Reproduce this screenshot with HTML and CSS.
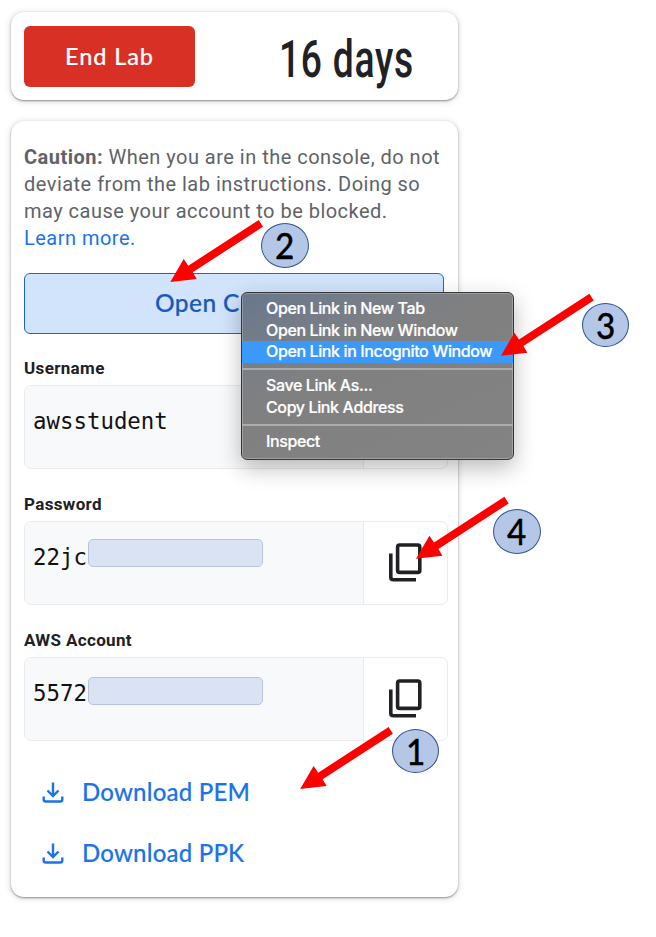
FILE: index.html
```html
<!DOCTYPE html>
<html lang="en">
<head>
<meta charset="utf-8">
<title>Lab</title>
<link rel="stylesheet" href="styles.css">
</head>
<body>
<main class="panel">
  <section class="card timer">
    <button class="end">End Lab</button>
    <div class="time"><span class="time-text">16 days</span></div>
  </section>
  <section class="card details">
    <p class="caution"><b>Caution:</b> When you are in the console, do not<br>deviate from the lab instructions. Doing so<br>may cause your account to be blocked.<br><a class="learn">Learn more.</a></p>
    <a class="open"><span>Open C</span></a>
    <h2 class="label">Username</h2>
    <div class="field"><div class="value">awsstudent</div><div class="copy"></div></div>
    <h2 class="label">Password</h2>
    <div class="field"><div class="value">22jc<span class="mask"></span></div><div class="copy"><svg width="48" height="48" viewBox="0 0 48 48" fill="none" stroke="#202124" stroke-width="3.6"><rect x="14.6" y="6" width="22.2" height="27.4" rx="2"/><path d="M7.8 14.4V38.2Q7.8 40.8 10.4 40.8H33"/></svg></div></div>
    <h2 class="label">AWS Account</h2>
    <div class="field"><div class="value">5572<span class="mask low"></span></div><div class="copy"><svg width="48" height="48" viewBox="0 0 48 48" fill="none" stroke="#202124" stroke-width="3.6"><rect x="14.6" y="6" width="22.2" height="27.4" rx="2"/><path d="M7.8 14.4V38.2Q7.8 40.8 10.4 40.8H33"/></svg></div></div>
    <div class="downloads">
      <a class="download"><svg width="24" height="24" viewBox="0 0 24 24" fill="none" stroke="#1a73e8" stroke-width="2.4"><path d="M12 1.5V14M6.5 9.5L12 15L17.5 9.5M2.7 15.5V18.5Q2.7 20.5 4.7 20.5H19.3Q21.3 20.5 21.3 18.5V15.5"/></svg><span>Download PEM</span></a>
      <a class="download"><svg width="24" height="24" viewBox="0 0 24 24" fill="none" stroke="#1a73e8" stroke-width="2.4"><path d="M12 1.5V14M6.5 9.5L12 15L17.5 9.5M2.7 15.5V18.5Q2.7 20.5 4.7 20.5H19.3Q21.3 20.5 21.3 18.5V15.5"/></svg><span>Download PPK</span></a>
    </div>
  </section>
</main>
<nav class="menu">
  <div class="item"><span>Open Link in New Tab</span></div>
  <div class="item"><span>Open Link in New Window</span></div>
  <div class="item active"><span>Open Link in Incognito Window</span></div>
  <hr>
  <div class="item"><span>Save Link As...</span></div>
  <div class="item"><span>Copy Link Address</span></div>
  <hr>
  <div class="item"><span>Inspect</span></div>
</nav>
<svg class="arrows" width="656" height="937" viewBox="0 0 656 937" fill="#f00">
  <defs><path id="arrow" d="M0 0L13.4-23L18-16.3L88.4-62L92.7-55.3L22.4-9.7L26.4-3Z"/></defs>
  <use href="#arrow" x="170.3" y="282"/>
  <use href="#arrow" x="501" y="355.7"/>
  <use href="#arrow" x="416" y="558.7"/>
  <use href="#arrow" x="300.2" y="789"/>
</svg>
<div class="badge b1"><span>1</span></div>
<div class="badge b2"><span>2</span></div>
<div class="badge b3"><span>3</span></div>
<div class="badge b4"><span>4</span></div>
</body>
</html>
```
FILE: styles.css
```css
* { box-sizing: border-box; }
body { margin: 0; width: 656px; height: 937px; position: relative; overflow: hidden; background: #fff; font-family: Roboto, sans-serif; color: #202124; }
.panel { width: 458px; padding: 12px 0 0 11px; display: flex; flex-direction: column; gap: 21px; }
.card { background: #fff; border-radius: 13px; box-shadow: 0 1px 2px rgba(0,0,0,.38), 0 1px 6px 1px rgba(0,0,0,.13); }
.timer { height: 88px; padding: 14px 13px; display: flex; }
.end { width: 171px; height: 61px; padding: 0; border: 0; border-radius: 6px; background: #d93025; color: #fff; font: 500 23.5px/61px Lato, sans-serif; letter-spacing: .9px; -webkit-text-stroke: .15px; }
.time { flex: 1; text-align: center; line-height: 68px; font-size: 51px; font-weight: 500; white-space: nowrap; padding-left: 52px; }
.time-text { display: inline-block; transform: scaleX(.73); margin: 0 -30px; letter-spacing: 1px; }
.details { height: 776px; padding: 23px 10px 0 13px; }
.caution { margin: 0; height: 129px; font-size: 20px; line-height: 27px; color: #5f6368; white-space: nowrap; letter-spacing: .48px; }
.learn { color: #1a73e8; }
.open { display: block; width: 420px; height: 61px; border: 1px solid #1967d2; border-radius: 6px; background: #d2e3fc; color: #185abc; font: 500 24.5px/58px Lato, sans-serif; letter-spacing: .4px; padding-left: 130px; -webkit-text-stroke: .2px; }
.label { height: 20px; margin: 25px 0 7px; font-size: 17px; line-height: 20px; font-weight: 700; letter-spacing: .35px; }
.open + .label { margin-top: 24px; }
.field { height: 84px; border: 1px solid #e8eaed; border-radius: 7px; display: flex; overflow: hidden; }
.value { position: relative; width: 338px; background: #f8f9fa; padding: 17px 0 0 8px; font: 22.4px/36px "DejaVu Sans Mono", monospace; color: #111; }
.mask { position: absolute; left: 63px; top: 17px; width: 175px; height: 28px; border: 1px solid #b4c3e0; border-radius: 5px; background: #dae3f3; }
.mask.low { top: 19px; }
.copy { flex: 1; border-left: 1px solid #e8eaed; padding: 17px 0 0 19px; }
.copy svg, .download svg { display: block; }
.downloads { padding: 20px 0 0 17px; }
.download { display: flex; height: 61px; align-items: center; gap: 17px; color: #1a73e8; font: 500 24px/30px Lato, sans-serif; letter-spacing: .2px; -webkit-text-stroke: .15px; }
.download svg { margin-top: 3px; }
.menu { position: absolute; left: 241px; top: 292px; width: 273px; height: 168px; border: 1px solid #373737; border-radius: 6px; background: linear-gradient(155deg, #68778e 0, #7c7f84 30%, #808080 45%, #838383 100%); box-shadow: inset 0 0 0 1px rgba(255,255,255,.24), 0 8px 22px rgba(0,0,0,.27); padding-top: 5px; color: #fff; font: 500 16px/21.5px Inter, sans-serif; letter-spacing: -.38px; -webkit-text-stroke: .2px; }
.item { height: 21.5px; padding-left: 24px; white-space: nowrap; }
.active { background: #3b99fc; }
.menu hr { margin: 5.5px 0 5px; height: 2px; border: 0; background: #acacac; }
.arrows { position: absolute; left: 0; top: 0; }
.badge { position: absolute; width: 47px; height: 44px; border: 1.5px solid #2f528f; border-radius: 50%; background: #b4c7e7; color: #000; font: 500 37px/41px Lato, sans-serif; text-align: center; -webkit-text-stroke: .3px; }
.badge span { display: inline-block; transform: scaleX(.9); }
.b1 { left: 392px; top: 729px; }
.b2 { left: 261px; top: 223px; width: 48px; height: 45px; }
.b3 { left: 582px; top: 303px; }
.b4 { left: 493px; top: 509px; width: 48px; height: 45px; }
```
